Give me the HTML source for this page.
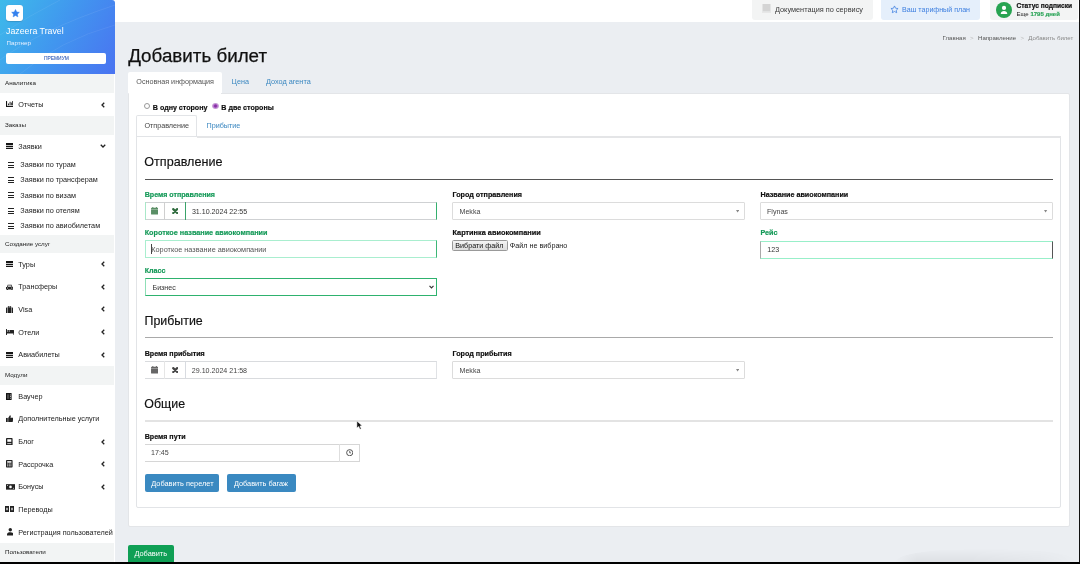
<!DOCTYPE html>
<html><head><meta charset="utf-8">
<style>
*{box-sizing:border-box;margin:0;padding:0}
html,body{width:1080px;height:564px;overflow:hidden;background:#000}
body{font-family:"Liberation Sans",sans-serif;position:relative}
.a{position:absolute}
.t{line-height:1;white-space:nowrap}
.b{font-weight:bold;-webkit-text-stroke:0.2px currentColor}
#pg{position:absolute;left:0;top:0;width:1080px;height:562px;overflow:hidden;will-change:transform}
</style></head><body><div id="pg">
<div class="a" style="left:0px;top:0px;width:1080px;height:562px;background:#ebeef2"></div>
<div class="a" style="left:115px;top:0px;width:965px;height:22px;background:#fff"></div>
<div class="a" style="left:752px;top:-3px;width:121px;height:23px;background:#f3f4f4;border-radius:3px"></div>
<svg class="a" style="left:762px;top:4px" width="9" height="9" viewBox="0 0 9 9"><rect x="0.5" y="0" width="8" height="7.5" fill="#d4d4d4"/><rect x="0" y="7.5" width="9" height="1.2" fill="#e2e2e2"/></svg>
<div class="a t" style="left:775px;top:6.00px;font-size:7.33px;color:#3a3a3a">Документация по сервису</div>
<div class="a" style="left:881px;top:-3px;width:99px;height:23px;background:#e5effb;border-radius:3px"></div>
<svg class="a" style="left:889.5px;top:5px" width="9" height="9" viewBox="0 0 24 24"><path d="M12 2.5l2.9 6.1 6.6.8-4.9 4.6 1.3 6.6L12 17.3l-5.9 3.3 1.3-6.6-4.9-4.6 6.6-.8z" fill="none" stroke="#3d7fe0" stroke-width="2" stroke-linejoin="round"/></svg>
<div class="a t" style="left:902px;top:7.00px;font-size:7.1px;color:#3d7fe0">Ваш тарифный план</div>
<div class="a" style="left:990px;top:-3px;width:88px;height:23px;background:#f3f4f4;border-radius:3px"></div>
<svg class="a" style="left:996px;top:1.5px" width="16" height="16" viewBox="0 0 16 16"><circle cx="8" cy="8" r="8" fill="#27a350"/><circle cx="8" cy="5.9" r="2.1" fill="#fff"/><path d="M4.8 11.6c0-1.8 1.4-2.7 3.2-2.7s3.2 0.9 3.2 2.7v0.5H4.8z" fill="#fff"/></svg>
<div class="a t" style="left:1016.5px;top:3.00px;font-size:6.65px;font-weight:bold;-webkit-text-stroke:0.2px currentColor;color:#111">Статус подписки</div>
<div class="a t" style="left:1016.5px;top:11.00px;font-size:6.0px;color:#222">Еще <b style="color:#2aa457;-webkit-text-stroke:0.15px currentColor">1795 дней</b></div>
<div class="a" style="left:1079px;top:0px;width:1px;height:564px;background:#111"></div>
<div class="a t" style="left:942.5px;top:35.00px;font-size:6.1px;color:#555">Главная</div>
<div class="a t" style="left:970px;top:35.00px;font-size:6.1px;color:#bbb">&gt;</div>
<div class="a t" style="left:978px;top:35.00px;font-size:6.1px;color:#555">Направление</div>
<div class="a t" style="left:1020.5px;top:35.00px;font-size:6.1px;color:#bbb">&gt;</div>
<div class="a t" style="left:1028.3px;top:35.00px;font-size:6.1px;color:#888">Добавить билет</div>
<div class="a t" style="left:128.2px;top:47.00px;font-size:18.8px;color:#111;-webkit-text-stroke:0.25px #111">Добавить билет</div>
<div class="a" style="left:128px;top:71.5px;width:93.5px;height:22px;background:#fff;border-radius:2px 2px 0 0"></div>
<div class="a t" style="left:136.3px;top:78.00px;font-size:7.2px;color:#555">Основная информация</div>
<div class="a t" style="left:231.6px;top:78.00px;font-size:7.2px;color:#3a87c0">Цена</div>
<div class="a t" style="left:266px;top:78.00px;font-size:7.3px;color:#3a87c0">Доход агента</div>
<div class="a" style="left:128px;top:92.7px;width:941.5px;height:434.3px;background:#fff;border:1px solid #e3e5e8;border-radius:0 2px 2px 2px"></div>
<div class="a" style="left:128.5px;top:92px;width:92.5px;height:1.5px;background:#fff"></div>
<div class="a" style="left:144px;top:102.8px;width:6.4px;height:6.4px;border-radius:50%;border:0.8px solid #999;background:#fff"></div>
<div class="a t" style="left:152.8px;top:105.00px;font-size:7.1px;font-weight:bold;-webkit-text-stroke:0.2px currentColor;color:#111">В одну сторону</div>
<div class="a" style="left:212.2px;top:102.7px;width:6.8px;height:6.8px;border-radius:50%;background:radial-gradient(circle,#7b2d98 0,#8e3aae 35%,#b46acb 60%,#d3a6e0 100%);border:0.5px solid #c49ad3"></div>
<div class="a t" style="left:221.3px;top:105.00px;font-size:7.1px;font-weight:bold;-webkit-text-stroke:0.2px currentColor;color:#111">В две стороны</div>
<div class="a" style="left:136.3px;top:115.4px;width:61px;height:21.5px;background:#fff;border:1px solid #e2e4e7;border-bottom:none;border-radius:2px 2px 0 0"></div>
<div class="a t" style="left:144.4px;top:122.00px;font-size:7.2px;color:#444">Отправление</div>
<div class="a t" style="left:206.5px;top:122.00px;font-size:7.2px;color:#3a87c0">Прибытие</div>
<div class="a" style="left:136.3px;top:136.3px;width:925.2px;height:372.2px;border:1px solid #e2e4e7;border-radius:0 0 2px 2px"></div>
<div class="a" style="left:197.3px;top:136.3px;width:864px;height:1.6px;background:#e4e5e7"></div>
<div class="a t" style="left:144.3px;top:156.00px;font-size:12.6px;color:#111;-webkit-text-stroke:0.15px #111">Отправление</div>
<div class="a" style="left:144.7px;top:179.2px;width:908.3px;height:1.1px;background:#555"></div>
<div class="a t" style="left:144.7px;top:192.00px;font-size:7.1px;font-weight:bold;-webkit-text-stroke:0.2px currentColor;color:#169a59">Время отправления</div>
<div class="a" style="left:145.3px;top:202.4px;width:292px;height:17.4px;background:#fff;border-top:1px solid #cfd1d3;border-bottom:1px solid #cfd1d3;border-right:1.2px solid #34b06e"></div>
<div class="a" style="left:144.7px;top:202.4px;width:1.4px;height:17.4px;background:#a9e8c9"></div>
<div class="a" style="left:164.2px;top:202.4px;width:0.9px;height:17.4px;background:#cfcfcf"></div>
<div class="a" style="left:184.8px;top:202.4px;width:1.5px;height:17.4px;background:#3aa36a"></div>
<svg class="a" style="left:151px;top:207.1px" width="7.2" height="7.6" viewBox="0 0 14 15"><rect x="0" y="1.5" width="14" height="13.5" rx="1.2" fill="#5a8f66"/><rect x="1.5" y="6" width="11" height="7.5" fill="#5a8f66" opacity="0.6"/><rect x="0" y="4.5" width="14" height="1.2" fill="#fff" opacity="0.5"/><rect x="2.5" y="0" width="2" height="3.2" fill="#5a8f66"/><rect x="9.5" y="0" width="2" height="3.2" fill="#5a8f66"/></svg>
<svg class="a" style="left:171.8px;top:207.8px" width="6.4" height="6.2" viewBox="0 0 12 12"><path d="M2.2 2.2L9.8 9.8M9.8 2.2L2.2 9.8" stroke="#2f6b3e" stroke-width="4.2" stroke-linecap="round"/></svg>
<div class="a t" style="left:191.9px;top:209.00px;font-size:7.1px;color:#333">31.10.2024 22:55</div>
<div class="a t" style="left:144.7px;top:229.00px;font-size:7.25px;font-weight:bold;-webkit-text-stroke:0.2px currentColor;color:#169a59">Короткое название авиокомпании</div>
<div class="a" style="left:144.7px;top:240.4px;width:292.3px;height:18px;background:#fff;border:1.6px solid #a9eecf;border-right:1.3px solid #3db676"></div>
<div class="a" style="left:150.6px;top:244.3px;width:0.6px;height:10px;background:#444"></div>
<div class="a t" style="left:151.3px;top:246.00px;font-size:7.3px;color:#555">Короткое название авиокомпании</div>
<div class="a t" style="left:144.7px;top:268.00px;font-size:7.1px;font-weight:bold;-webkit-text-stroke:0.2px currentColor;color:#169a59">Класс</div>
<div class="a" style="left:144.6px;top:278.3px;width:292.4px;height:17.6px;background:#fff;border:1.3px solid #2eb26e;border-left-color:#8fdfb7"></div>
<div class="a t" style="left:152.5px;top:285.00px;font-size:7.1px;color:#333">Бизнес</div>
<svg class="a" style="left:428.5px;top:285px" width="5" height="4" viewBox="0 0 10 7"><path d="M1 1.2L5 5.2L9 1.2" fill="none" stroke="#333" stroke-width="2.3"/></svg>
<div class="a t" style="left:452.5px;top:191.00px;font-size:7.2px;font-weight:bold;-webkit-text-stroke:0.2px currentColor;color:#111">Город отправления</div>
<div class="a" style="left:452.3px;top:202.3px;width:292.6px;height:17.4px;background:#fff;border:1px solid #dcdcdc;border-radius:1px"></div>
<div class="a t" style="left:459.5px;top:209.00px;font-size:7.1px;color:#444">Mekka</div>
<svg class="a" style="left:736.3px;top:210.3px" width="3.2" height="2.4" viewBox="0 0 8 6"><path d="M0 0H8L4 6z" fill="#888"/></svg>
<div class="a t" style="left:452.5px;top:229.00px;font-size:7.33px;font-weight:bold;-webkit-text-stroke:0.2px currentColor;color:#111">Картинка авиокомпании</div>
<div class="a" style="left:452.2px;top:240.3px;width:55.6px;height:10.3px;background:linear-gradient(#f4f4f4,#dedede);border:0.8px solid #999;border-radius:1.5px"></div>
<div class="a t" style="left:455.3px;top:242.00px;font-size:7.2px;color:#111">Вибрати файл</div>
<div class="a t" style="left:509.8px;top:242.00px;font-size:7.2px;color:#222">Файл не вибрано</div>
<div class="a t" style="left:760.5px;top:191.00px;font-size:7.2px;font-weight:bold;-webkit-text-stroke:0.2px currentColor;color:#111">Название авиокомпании</div>
<div class="a" style="left:760.3px;top:202.3px;width:292.6px;height:17.4px;background:#fff;border:1px solid #dcdcdc;border-radius:1px"></div>
<div class="a t" style="left:767px;top:209.00px;font-size:7.1px;color:#444">Flynas</div>
<svg class="a" style="left:1044.4px;top:210.3px" width="3.2" height="2.4" viewBox="0 0 8 6"><path d="M0 0H8L4 6z" fill="#888"/></svg>
<div class="a t" style="left:760.5px;top:229.00px;font-size:7.2px;font-weight:bold;-webkit-text-stroke:0.2px currentColor;color:#169a59">Рейс</div>
<div class="a" style="left:760.3px;top:240.5px;width:292.6px;height:18px;background:#fff;border:1.4px solid #98efc9;border-left-color:#a9a9a9;border-right-color:#555"></div>
<div class="a t" style="left:767.3px;top:247.00px;font-size:7.1px;color:#333">123</div>
<div class="a t" style="left:144.5px;top:315.00px;font-size:12.4px;color:#111;-webkit-text-stroke:0.15px #111">Прибытие</div>
<div class="a" style="left:144.7px;top:337.3px;width:908.3px;height:1.1px;background:#a9a9a9"></div>
<div class="a t" style="left:144.7px;top:351.00px;font-size:7.1px;font-weight:bold;-webkit-text-stroke:0.2px currentColor;color:#111">Время прибытия</div>
<div class="a" style="left:145px;top:361px;width:292px;height:17.6px;background:#fff;border-top:1px solid #d9dbde;border-bottom:1px solid #d9dbde;border-right:1px solid #e0e2e5"></div>
<div class="a" style="left:164.3px;top:361px;width:0.9px;height:17.6px;background:#e6e6e6"></div>
<div class="a" style="left:185.1px;top:361px;width:1px;height:17.6px;background:#d8dbe0"></div>
<svg class="a" style="left:151px;top:366.1px" width="7.2" height="7.6" viewBox="0 0 14 15"><rect x="0" y="1.5" width="14" height="13.5" rx="1.2" fill="#666"/><rect x="1.5" y="6" width="11" height="7.5" fill="#666" opacity="0.6"/><rect x="0" y="4.5" width="14" height="1.2" fill="#fff" opacity="0.5"/><rect x="2.5" y="0" width="2" height="3.2" fill="#666"/><rect x="9.5" y="0" width="2" height="3.2" fill="#666"/></svg>
<svg class="a" style="left:171.8px;top:366.8px" width="6.4" height="6.2" viewBox="0 0 12 12"><path d="M2.2 2.2L9.8 9.8M9.8 2.2L2.2 9.8" stroke="#444" stroke-width="4.2" stroke-linecap="round"/></svg>
<div class="a t" style="left:191.8px;top:368.00px;font-size:7.1px;color:#444">29.10.2024 21:58</div>
<div class="a t" style="left:452.5px;top:350.00px;font-size:7.2px;font-weight:bold;-webkit-text-stroke:0.2px currentColor;color:#111">Город прибытия</div>
<div class="a" style="left:452.3px;top:361.3px;width:292.6px;height:17.4px;background:#fff;border:1px solid #dcdcdc;border-radius:1px"></div>
<div class="a t" style="left:459.5px;top:368.00px;font-size:7.1px;color:#444">Mekka</div>
<svg class="a" style="left:736px;top:369.3px" width="3.2" height="2.4" viewBox="0 0 8 6"><path d="M0 0H8L4 6z" fill="#888"/></svg>
<div class="a t" style="left:144.3px;top:398.00px;font-size:12.4px;color:#111;-webkit-text-stroke:0.15px #111">Общие</div>
<div class="a" style="left:144.7px;top:420px;width:908.3px;height:1.6px;background:#e3e3e3"></div>
<div class="a t" style="left:144.7px;top:434.00px;font-size:7.1px;font-weight:bold;-webkit-text-stroke:0.2px currentColor;color:#111">Время пути</div>
<div class="a" style="left:145px;top:444px;width:215px;height:17.6px;background:#fff;border-top:1px solid #d6d6d6;border-bottom:1px solid #d6d6d6;border-right:1px solid #d6d6d6"></div>
<div class="a" style="left:339px;top:444px;width:1px;height:17.6px;background:#dedede"></div>
<svg class="a" style="left:345.7px;top:449px" width="7.4" height="7.4" viewBox="0 0 14 14"><circle cx="7" cy="7" r="5.8" fill="none" stroke="#444" stroke-width="1.7"/><path d="M7 3.6V7.3H9.6" fill="none" stroke="#444" stroke-width="1.5"/></svg>
<div class="a t" style="left:151px;top:450.00px;font-size:7.1px;color:#444">17:45</div>
<div class="a" style="left:144.6px;top:474px;width:74.4px;height:17.8px;background:#3a89c1;border-radius:2px"></div>
<div class="a t" style="left:151.2px;top:480.00px;font-size:7.4px;color:#fff">Добавить перелет</div>
<div class="a" style="left:227.2px;top:474px;width:68.9px;height:17.8px;background:#3a89c1;border-radius:2px"></div>
<div class="a t" style="left:233.9px;top:480.00px;font-size:7.35px;color:#fff">Добавить багаж</div>
<svg class="a" style="left:355.6px;top:420.2px" width="7" height="10" viewBox="0 0 8 11"><path d="M1 1L1 9L3 7.2L4.6 10.4L6 9.7L4.5 6.6L7 6.4z" fill="#111" stroke="#fff" stroke-width="0.6"/></svg>
<div class="a" style="left:128.1px;top:544.9px;width:45.7px;height:20px;background:#0f9f55;border-radius:2px 2px 0 0"></div>
<div class="a t" style="left:134.4px;top:550.00px;font-size:7.4px;color:#fff">Добавить</div>
<div class="a" style="left:895px;top:549px;width:182px;height:13px;background:linear-gradient(rgba(0,0,0,0),rgba(0,0,0,0.055));-webkit-mask-image:linear-gradient(90deg,transparent 0,#000 12%,#000 40%,rgba(0,0,0,0.5) 80%,transparent 100%);border-radius:40% 40% 0 0/100% 100% 0 0"></div>
<div class="a" style="left:0px;top:0px;width:115px;height:562px;background:#fff"></div>
<div class="a" style="left:0;top:0;width:115px;height:74px;background:linear-gradient(120deg,#3dbbea 0%,#4196ef 50%,#4a73f1 100%);border-top-right-radius:3px;overflow:hidden"><svg class="a" style="left:0;top:0" width="115" height="74"><path d="M0 60 Q40 30 115 5" stroke="rgba(255,255,255,0.08)" fill="none" stroke-width="1"/><path d="M20 74 Q60 40 115 25" stroke="rgba(255,255,255,0.07)" fill="none" stroke-width="1"/><path d="M0 35 Q30 15 60 0" stroke="rgba(255,255,255,0.07)" fill="none" stroke-width="1"/></svg></div>
<div class="a" style="left:6px;top:4.8px;width:17px;height:16.5px;background:#fff;border-radius:3px;box-shadow:0 0.5px 1px rgba(0,0,0,0.15)"></div>
<svg class="a" style="left:10.8px;top:8.9px" width="9" height="8.8" viewBox="0 0 24 24"><path d="M12 1.5l3.2 6.7 7.3.9-5.4 5 1.4 7.3L12 17.8l-6.5 3.6 1.4-7.3-5.4-5 7.3-.9z" fill="#3381ee" stroke="#3381ee" stroke-width="1.5" stroke-linejoin="round"/></svg>
<div class="a t" style="left:6px;top:27.00px;font-size:8.8px;color:#fff">Jazeera Travel</div>
<div class="a t" style="left:6.5px;top:40.00px;font-size:6.2px;color:#e6efff">Партнер</div>
<div class="a" style="left:6px;top:53px;width:100px;height:11px;background:#fff;border-radius:2px"></div>
<div class="a t" style="left:44px;top:57.00px;font-size:4.9px;color:#3c64bc;-webkit-text-stroke:0.1px #3c64bc">ПРЕМИУМ</div>
<div class="a" style="left:0px;top:74px;width:114px;height:19px;background:#f2f4f4"></div>
<div class="a t" style="left:5px;top:80.00px;font-size:6.25px;color:#222">Аналитика</div>
<div class="a t" style="left:18.3px;top:101.00px;font-size:7.25px;color:#222">Отчеты</div>
<svg class="a" style="left:5.8px;top:101.20px" width="7.4" height="6" viewBox="0 0 15 12"><rect x="0" y="0" width="2.2" height="12" fill="#111"/><rect x="0" y="9.8" width="15" height="2.2" fill="#111"/><rect x="4" y="5" width="2" height="3.5" fill="#222"/><rect x="7.3" y="1.5" width="2" height="7" fill="#222"/><rect x="10.6" y="3" width="2" height="5.5" fill="#222"/><rect x="12.6" y="0" width="2" height="8.5" fill="#222"/></svg>
<svg class="a" style="left:100.8px;top:101.50px" width="4" height="6" viewBox="0 0 8 12"><path d="M6.5 1.5L2 6L6.5 10.5" fill="none" stroke="#222" stroke-width="2.6"/></svg>
<div class="a" style="left:0px;top:116px;width:114px;height:19px;background:#f2f4f4"></div>
<div class="a t" style="left:5px;top:122.00px;font-size:6.25px;color:#222">Заказы</div>
<div class="a t" style="left:18.3px;top:143.00px;font-size:7.25px;color:#222">Заявки</div>
<div class="a" style="left:6px;top:143px;width:7px;height:6px;background:#151515"></div>
<div class="a" style="left:6px;top:145px;width:7px;height:0.7px;background:#fff;opacity:0.75"></div>
<div class="a" style="left:6px;top:147px;width:7px;height:0.7px;background:#fff;opacity:0.75"></div>
<svg class="a" style="left:100.3px;top:144.00px" width="6" height="4" viewBox="0 0 12 8"><path d="M1.5 1.5L6 6L10.5 1.5" fill="none" stroke="#222" stroke-width="2.6"/></svg>
<div class="a t" style="left:20.3px;top:161.00px;font-size:7.25px;color:#222">Заявки по турам</div>
<div class="a" style="left:8.2px;top:162.2px;width:6px;height:1.25px;background:#222"></div>
<div class="a" style="left:8.2px;top:164.6px;width:6px;height:1.25px;background:#222"></div>
<div class="a" style="left:8.2px;top:167.0px;width:6px;height:1.25px;background:#222"></div>
<div class="a t" style="left:20.3px;top:176.00px;font-size:7.25px;color:#222">Заявки по трансферам</div>
<div class="a" style="left:8.2px;top:177.2px;width:6px;height:1.25px;background:#222"></div>
<div class="a" style="left:8.2px;top:179.6px;width:6px;height:1.25px;background:#222"></div>
<div class="a" style="left:8.2px;top:182.0px;width:6px;height:1.25px;background:#222"></div>
<div class="a t" style="left:20.3px;top:192.00px;font-size:7.25px;color:#222">Заявки по визам</div>
<div class="a" style="left:8.2px;top:192.2px;width:6px;height:1.25px;background:#222"></div>
<div class="a" style="left:8.2px;top:194.6px;width:6px;height:1.25px;background:#222"></div>
<div class="a" style="left:8.2px;top:197.0px;width:6px;height:1.25px;background:#222"></div>
<div class="a t" style="left:20.3px;top:207.00px;font-size:7.25px;color:#222">Заявки по отелям</div>
<div class="a" style="left:8.2px;top:208.2px;width:6px;height:1.25px;background:#222"></div>
<div class="a" style="left:8.2px;top:210.6px;width:6px;height:1.25px;background:#222"></div>
<div class="a" style="left:8.2px;top:213.0px;width:6px;height:1.25px;background:#222"></div>
<div class="a t" style="left:20.3px;top:222.00px;font-size:7.25px;color:#222">Заявки по авиобилетам</div>
<div class="a" style="left:8.2px;top:223.2px;width:6px;height:1.25px;background:#222"></div>
<div class="a" style="left:8.2px;top:225.6px;width:6px;height:1.25px;background:#222"></div>
<div class="a" style="left:8.2px;top:228.0px;width:6px;height:1.25px;background:#222"></div>
<div class="a" style="left:0px;top:234.8px;width:114px;height:18.0px;background:#f2f4f4"></div>
<div class="a t" style="left:5px;top:241.00px;font-size:6.25px;color:#222">Создание услуг</div>
<div class="a t" style="left:18.3px;top:261.00px;font-size:7.25px;color:#222">Туры</div>
<div class="a" style="left:6px;top:261px;width:7px;height:6px;background:#151515"></div>
<div class="a" style="left:6px;top:263px;width:7px;height:0.7px;background:#fff;opacity:0.75"></div>
<div class="a" style="left:6px;top:265px;width:7px;height:0.7px;background:#fff;opacity:0.75"></div>
<svg class="a" style="left:100.8px;top:261.12px" width="4" height="6" viewBox="0 0 8 12"><path d="M6.5 1.5L2 6L6.5 10.5" fill="none" stroke="#222" stroke-width="2.6"/></svg>
<div class="a t" style="left:18.3px;top:283.00px;font-size:7.25px;color:#222">Трансферы</div>
<svg class="a" style="left:6px;top:283.57px" width="7.4" height="6.4" viewBox="0 0 15 13"><path d="M2 6L3.5 1.5H11.5L13 6H15V11H13V13H11V11H4V13H2V11H0V6z" fill="#222"/><rect x="4" y="3" width="7" height="2.5" fill="#fff"/><circle cx="3.2" cy="8.3" r="1.1" fill="#fff"/><circle cx="11.8" cy="8.3" r="1.1" fill="#fff"/></svg>
<svg class="a" style="left:100.8px;top:283.77px" width="4" height="6" viewBox="0 0 8 12"><path d="M6.5 1.5L2 6L6.5 10.5" fill="none" stroke="#222" stroke-width="2.6"/></svg>
<div class="a t" style="left:18.3px;top:306.00px;font-size:7.25px;color:#222">Visa</div>
<svg class="a" style="left:6px;top:305.82px" width="7" height="7.2" viewBox="0 0 14 14"><rect x="0" y="3" width="14" height="11" fill="#222"/><rect x="4.5" y="0" width="5" height="3.5" fill="none" stroke="#222" stroke-width="1.4"/><rect x="3" y="3" width="1" height="11" fill="#fff"/><rect x="10" y="3" width="1" height="11" fill="#fff"/></svg>
<svg class="a" style="left:100.8px;top:306.42px" width="4" height="6" viewBox="0 0 8 12"><path d="M6.5 1.5L2 6L6.5 10.5" fill="none" stroke="#222" stroke-width="2.6"/></svg>
<div class="a t" style="left:18.3px;top:329.00px;font-size:7.25px;color:#222">Отели</div>
<svg class="a" style="left:6px;top:329.07px" width="8.4" height="6" viewBox="0 0 17 12"><rect x="0" y="0" width="2" height="12" fill="#222"/><rect x="0" y="6" width="17" height="3" fill="#222"/><rect x="15" y="6" width="2" height="6" fill="#222"/><circle cx="4.5" cy="4" r="2" fill="#222"/><path d="M7 2H15A2 2 0 0 1 17 4V6H7z" fill="#222"/></svg>
<svg class="a" style="left:100.8px;top:329.07px" width="4" height="6" viewBox="0 0 8 12"><path d="M6.5 1.5L2 6L6.5 10.5" fill="none" stroke="#222" stroke-width="2.6"/></svg>
<div class="a t" style="left:18.3px;top:351.00px;font-size:7.25px;color:#222">Авиабилеты</div>
<div class="a" style="left:6px;top:352px;width:7px;height:6px;background:#151515"></div>
<div class="a" style="left:6px;top:354px;width:7px;height:0.7px;background:#fff;opacity:0.75"></div>
<div class="a" style="left:6px;top:356px;width:7px;height:0.7px;background:#fff;opacity:0.75"></div>
<svg class="a" style="left:100.8px;top:351.72px" width="4" height="6" viewBox="0 0 8 12"><path d="M6.5 1.5L2 6L6.5 10.5" fill="none" stroke="#222" stroke-width="2.6"/></svg>
<div class="a" style="left:0px;top:366.1px;width:114px;height:18.799999999999955px;background:#f2f4f4"></div>
<div class="a t" style="left:5px;top:372.00px;font-size:6.25px;color:#222">Модули</div>
<div class="a t" style="left:18.3px;top:393.00px;font-size:7.25px;color:#222">Ваучер</div>
<svg class="a" style="left:6px;top:392.52px" width="5.6" height="7.2" viewBox="0 0 11 14"><rect x="0" y="0" width="11" height="14" fill="#111"/><rect x="2" y="2.5" width="4.5" height="9" fill="#fff" opacity="0.25"/><rect x="8" y="3" width="1.6" height="1.6" fill="#fff"/><rect x="8" y="6.2" width="1.6" height="1.6" fill="#fff"/><rect x="8" y="9.4" width="1.6" height="1.6" fill="#fff"/></svg>
<div class="a t" style="left:18.3px;top:415.00px;font-size:7.25px;color:#222">Дополнительные услуги</div>
<svg class="a" style="left:6px;top:415.07px" width="7.4" height="7.4" viewBox="0 0 15 15"><rect x="0" y="6" width="3.5" height="9" fill="#222"/><path d="M4.5 6L8 0.5C9.5 0.5 10 1.5 9.6 3L9 5.5H14C15 5.5 15.2 6.5 15 7.2L13.5 14C13.3 14.7 12.8 15 12 15H4.5z" fill="#222"/></svg>
<div class="a t" style="left:18.3px;top:438.00px;font-size:7.25px;color:#222">Блог</div>
<svg class="a" style="left:6.4px;top:437.72px" width="6.6" height="7.6" viewBox="0 0 13 15"><rect x="0" y="0" width="13" height="15" rx="1.5" fill="#222"/><rect x="2.5" y="2.5" width="8" height="5" fill="#fff"/><rect x="2.5" y="10.5" width="8" height="1.5" fill="#fff"/></svg>
<svg class="a" style="left:100.8px;top:438.52px" width="4" height="6" viewBox="0 0 8 12"><path d="M6.5 1.5L2 6L6.5 10.5" fill="none" stroke="#222" stroke-width="2.6"/></svg>
<div class="a t" style="left:18.3px;top:461.00px;font-size:7.25px;color:#222">Рассрочка</div>
<svg class="a" style="left:6.4px;top:460.37px" width="6.6" height="7.6" viewBox="0 0 13 15"><rect x="0" y="0" width="13" height="15" rx="1.5" fill="#222"/><rect x="2.3" y="2.3" width="8.4" height="3" fill="#fff"/><rect x="2.3" y="7" width="2" height="2" fill="#fff"/><rect x="5.5" y="7" width="2" height="2" fill="#fff"/><rect x="8.7" y="7" width="2" height="2" fill="#fff"/><rect x="2.3" y="10.5" width="2" height="2" fill="#fff"/><rect x="5.5" y="10.5" width="2" height="2" fill="#fff"/><rect x="8.7" y="10.5" width="2" height="2" fill="#fff"/></svg>
<svg class="a" style="left:100.8px;top:461.17px" width="4" height="6" viewBox="0 0 8 12"><path d="M6.5 1.5L2 6L6.5 10.5" fill="none" stroke="#222" stroke-width="2.6"/></svg>
<div class="a t" style="left:18.3px;top:483.00px;font-size:7.25px;color:#222">Бонусы</div>
<svg class="a" style="left:5.5px;top:484.02px" width="9" height="5.8" viewBox="0 0 18 11"><rect x="0" y="0" width="18" height="11" fill="#222"/><circle cx="9" cy="5.5" r="2.6" fill="#fff"/><rect x="2" y="2" width="1.6" height="1.6" fill="#fff"/><rect x="14.4" y="7.4" width="1.6" height="1.6" fill="#fff"/></svg>
<svg class="a" style="left:100.8px;top:483.82px" width="4" height="6" viewBox="0 0 8 12"><path d="M6.5 1.5L2 6L6.5 10.5" fill="none" stroke="#222" stroke-width="2.6"/></svg>
<div class="a t" style="left:18.3px;top:506.00px;font-size:7.25px;color:#222">Переводы</div>
<svg class="a" style="left:5.4px;top:506.47px" width="9" height="6" viewBox="0 0 18 12"><rect x="0" y="0" width="8" height="12" fill="#222"/><rect x="10" y="0" width="8" height="12" fill="#222"/><rect x="2.8" y="3.5" width="2.4" height="5" fill="#fff"/><rect x="12.8" y="3.5" width="2.4" height="5" fill="#fff"/></svg>
<div class="a t" style="left:18.3px;top:529.00px;font-size:7.25px;color:#222">Регистрация пользователей</div>
<svg class="a" style="left:6.5px;top:528.32px" width="6.6" height="7.6" viewBox="0 0 13 15"><circle cx="6.5" cy="3.6" r="3.4" fill="#222"/><path d="M0 15V12.5C0 9.5 3 8.3 6.5 8.3S13 9.5 13 12.5V15z" fill="#222"/></svg>
<div class="a" style="left:0px;top:543.4px;width:114px;height:18.600000000000023px;background:#f2f4f4"></div>
<div class="a t" style="left:5px;top:549.00px;font-size:6.25px;color:#222">Пользователи</div>
</div></body></html>
